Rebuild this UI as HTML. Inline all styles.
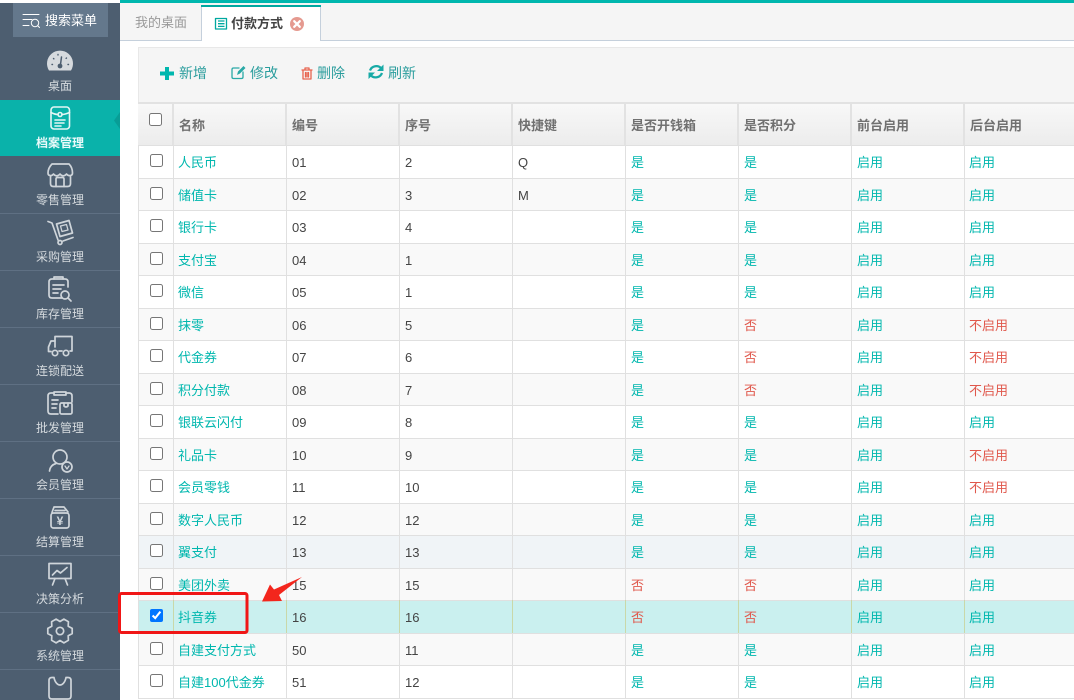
<!DOCTYPE html>
<html lang="zh"><head><meta charset="utf-8"><title>付款方式</title>
<style>
html,body{margin:0;padding:0;width:1074px;height:700px;overflow:hidden;background:#fff}
body{position:relative;font:13px/1.2 "Liberation Sans","Noto Sans CJK SC",sans-serif;color:#444}
#side{position:absolute;left:0;top:0;width:120px;height:700px;background:#4d5e70}
.m{position:absolute;left:0;width:120px;text-align:center;font-size:12px;line-height:18px;color:#d5dade}
.l{position:absolute;left:0;width:120px;height:1px;background:#5f7083}
#top{position:absolute;left:0;top:0;width:120px;height:3px;background:#fff}
#search{position:absolute;left:13px;top:3px;width:95px;height:34px;background:#64788c;color:#fff;line-height:36px;text-indent:32px}
#act{position:absolute;left:0;top:100px;width:120px;height:56px;background:#0ab2aa}
#bar{position:absolute;left:120px;top:0;width:954px;height:3px;background:#00b7ae}
#tabs{position:absolute;left:120px;top:3px;width:954px;height:37px;background:#f5f5f5;border-bottom:1px solid #c5d0dc}
#t1{position:absolute;left:135px;top:15px;color:#999;line-height:16px}
#t2{position:absolute;left:201px;top:5px;width:118px;height:36px;background:#fff;border-left:1px solid #c5d0dc;border-right:1px solid #c5d0dc;box-sizing:content-box}
#t2c{position:absolute;left:201px;top:5px;width:120px;height:2px;background:#00a8a0}
#t2t{position:absolute;left:231px;top:15px;color:#444;font-weight:bold;line-height:17px}
#tool{position:absolute;left:138px;top:47px;width:936px;height:55px;background:#f5f5f5;box-shadow:inset 0 1px 0 #e8e8e8,inset 1px 0 0 #e8e8e8}
#toolb{position:absolute;left:138px;top:102px;width:936px;height:2px;background:#e2e2e2}
.tb{position:absolute;top:64px;font-size:14px;line-height:18px;color:#2a9d9d}
#head{position:absolute;left:138px;top:104px;width:936px;height:41px;background:linear-gradient(#f8f8f8,#ececec)}
#head span{position:absolute;top:0;height:41px;line-height:43px;border-left:2px solid #e2e2e2;padding-left:5px;font-weight:bold;color:#707070;box-sizing:border-box;width:113px}
#head input{position:absolute;left:11px;top:9px;margin:0}
.r{position:absolute;left:138px;width:936px;height:33px;background:#fff;box-shadow:inset 0 1px 0 #e0e0e0}
.r.s{height:32px}
.r.g{background:#f9f9f9}
.r.h{background:#f0f4f7}
.r.x{background:#caf0ef}
.r input{position:absolute;left:12px;top:9px;margin:0}
.r span{position:absolute;top:0;height:100%;line-height:36px;border-left:1px solid #e0e0e0;padding-left:5px;white-space:nowrap;box-sizing:border-box;width:113px}
.r.x span{border-left-color:#c9d8a9}
.r::before{content:"";position:absolute;left:0;top:0;bottom:0;width:1px;background:#e0e0e0}
.r span:nth-of-type(1),#head span:nth-of-type(1){left:35px}
.r span:nth-of-type(2),#head span:nth-of-type(2){left:148px}
.r span:nth-of-type(3),#head span:nth-of-type(3){left:261px}
.r span:nth-of-type(4),#head span:nth-of-type(4){left:374px}
.r span:nth-of-type(5),#head span:nth-of-type(5){left:487px}
.r span:nth-of-type(6),#head span:nth-of-type(6){left:600px}
.r span:nth-of-type(7),#head span:nth-of-type(7){left:713px}
.r span:nth-of-type(8),#head span:nth-of-type(8){left:826px}
#head span{margin-left:-1px}
.r span:nth-of-type(1){padding-left:4px}
.r span:nth-of-type(8){padding-left:4px}
.t{color:#00b7ae}.d{color:#e0584c}
#end{position:absolute;left:138px;top:698px;width:936px;height:1px;background:#e0e0e0}
svg{position:absolute;left:0;top:0}
</style></head><body>
<div id="side"></div>
<div id="top"></div>
<div id="act"></div>
<div id="search">搜索菜单</div>
<div class="m" style="top:77px">桌面</div>
<div class="m" style="top:134px;color:#eafafa;font-weight:bold">档案管理</div>
<div class="m" style="top:191px">零售管理</div>
<div class="m" style="top:248px">采购管理</div>
<div class="m" style="top:305px">库存管理</div>
<div class="m" style="top:362px">连锁配送</div>
<div class="m" style="top:419px">批发管理</div>
<div class="m" style="top:476px">会员管理</div>
<div class="m" style="top:533px">结算管理</div>
<div class="m" style="top:590px">决策分析</div>
<div class="m" style="top:647px">系统管理</div>
<div class="l" style="top:213px"></div><div class="l" style="top:270px"></div><div class="l" style="top:327px"></div><div class="l" style="top:384px"></div><div class="l" style="top:441px"></div><div class="l" style="top:498px"></div><div class="l" style="top:555px"></div><div class="l" style="top:612px"></div><div class="l" style="top:669px"></div>

<div id="bar"></div>
<div id="tabs"></div>
<div id="t1">我的桌面</div>
<div id="t2"></div><div id="t2c"></div>
<div id="t2t">付款方式</div>
<div id="tool"></div><div id="toolb"></div>
<div class="tb" style="left:179px">新增</div>
<div class="tb" style="left:250px">修改</div>
<div class="tb" style="left:317px">删除</div>
<div class="tb" style="left:388px">刷新</div>

<div id="head"><input type="checkbox"><span>名称</span><span>编号</span><span>序号</span><span>快捷键</span><span>是否开钱箱</span><span>是否积分</span><span>前台启用</span><span>后台启用</span></div>

<div class="r" style="top:145px"><input type="checkbox"><span class="t">人民币</span><span>01</span><span>2</span><span>Q</span><span class="t">是</span><span class="t">是</span><span class="t">启用</span><span class="t">启用</span></div>
<div class="r s g" style="top:178px"><input type="checkbox"><span class="t">储值卡</span><span>02</span><span>3</span><span>M</span><span class="t">是</span><span class="t">是</span><span class="t">启用</span><span class="t">启用</span></div>
<div class="r" style="top:210px"><input type="checkbox"><span class="t">银行卡</span><span>03</span><span>4</span><span></span><span class="t">是</span><span class="t">是</span><span class="t">启用</span><span class="t">启用</span></div>
<div class="r s g" style="top:243px"><input type="checkbox"><span class="t">支付宝</span><span>04</span><span>1</span><span></span><span class="t">是</span><span class="t">是</span><span class="t">启用</span><span class="t">启用</span></div>
<div class="r" style="top:275px"><input type="checkbox"><span class="t">微信</span><span>05</span><span>1</span><span></span><span class="t">是</span><span class="t">是</span><span class="t">启用</span><span class="t">启用</span></div>
<div class="r s g" style="top:308px"><input type="checkbox"><span class="t">抹零</span><span>06</span><span>5</span><span></span><span class="t">是</span><span class="d">否</span><span class="t">启用</span><span class="d">不启用</span></div>
<div class="r" style="top:340px"><input type="checkbox"><span class="t">代金券</span><span>07</span><span>6</span><span></span><span class="t">是</span><span class="d">否</span><span class="t">启用</span><span class="d">不启用</span></div>
<div class="r s g" style="top:373px"><input type="checkbox"><span class="t">积分付款</span><span>08</span><span>7</span><span></span><span class="t">是</span><span class="d">否</span><span class="t">启用</span><span class="d">不启用</span></div>
<div class="r" style="top:405px"><input type="checkbox"><span class="t">银联云闪付</span><span>09</span><span>8</span><span></span><span class="t">是</span><span class="t">是</span><span class="t">启用</span><span class="t">启用</span></div>
<div class="r s g" style="top:438px"><input type="checkbox"><span class="t">礼品卡</span><span>10</span><span>9</span><span></span><span class="t">是</span><span class="t">是</span><span class="t">启用</span><span class="d">不启用</span></div>
<div class="r" style="top:470px"><input type="checkbox"><span class="t">会员零钱</span><span>11</span><span>10</span><span></span><span class="t">是</span><span class="t">是</span><span class="t">启用</span><span class="d">不启用</span></div>
<div class="r s g" style="top:503px"><input type="checkbox"><span class="t">数字人民币</span><span>12</span><span>12</span><span></span><span class="t">是</span><span class="t">是</span><span class="t">启用</span><span class="t">启用</span></div>
<div class="r h" style="top:535px"><input type="checkbox"><span class="t">翼支付</span><span>13</span><span>13</span><span></span><span class="t">是</span><span class="t">是</span><span class="t">启用</span><span class="t">启用</span></div>
<div class="r s g" style="top:568px"><input type="checkbox"><span class="t">美团外卖</span><span>15</span><span>15</span><span></span><span class="d">否</span><span class="d">否</span><span class="t">启用</span><span class="t">启用</span></div>
<div class="r x" style="top:600px"><input type="checkbox" checked><span class="t">抖音券</span><span>16</span><span>16</span><span></span><span class="d">否</span><span class="d">否</span><span class="t">启用</span><span class="t">启用</span></div>
<div class="r s g" style="top:633px"><input type="checkbox"><span class="t">自建支付方式</span><span>50</span><span>11</span><span></span><span class="t">是</span><span class="t">是</span><span class="t">启用</span><span class="t">启用</span></div>
<div class="r" style="top:665px"><input type="checkbox"><span class="t">自建100代金券</span><span>51</span><span>12</span><span></span><span class="t">是</span><span class="t">是</span><span class="t">启用</span><span class="t">启用</span></div>
<div id="end"></div>

<svg width="1074" height="700" viewBox="0 0 1074 700" fill="none" stroke-linecap="round" stroke-linejoin="round">
<!-- search -->
<g stroke="#fff" stroke-width="1"><path d="M23 14.500H39M23 19.500H32M23 25.500H29"/><circle cx="35" cy="23" r="3.700"/><path d="M38 26l1.500 1.500"/></g>
<!-- gauge -->
<path d="M49 70.500A13 13 0 1 1 71 70.500Z" fill="#d6dade"/>
<path d="M61.500 57L60.300 66" stroke="#4d5e70" stroke-width="1.500"/><circle cx="60" cy="66" r="2.400" fill="#4d5e70"/>
<g stroke="#4d5e70" stroke-width="1.400"><path d="M52 64.500h.5M53.500 58.500l.4.4M58 54.500v.5M66.500 58l-.4.4M68.500 64.500h-.5"/></g>
<!-- archive -->
<g stroke="#e4f6f5" stroke-width="1.600"><rect x="51" y="107" width="18.500" height="22" rx="3"/><path d="M51 112.500C54 114 56 114.500 58 114.500M62 114.500C64 114.500 66 114 69.500 112.500"/><circle cx="60" cy="114.500" r="2"/><path d="M55 120H65M55 123H64M55 126H61"/></g>
<path d="M120 112L114 120.500L120 129Z" fill="#089d96"/>
<g stroke="#cfd5da" stroke-width="1.700">
<!-- store -->
<path d="M52 164H69C71 166 72.500 169 72.500 173C72.500 176 68.500 176.500 66.500 174C64.500 176.500 62 176.500 60 174C58 176.500 55.500 176.500 53.500 174C51.500 176.500 48 176 48 173C48 169 50 166 52 164Z"/><path d="M50.500 176.500V183.500Q50.500 186.500 53.500 186.500H67.500Q70.500 186.500 70.500 183.500V176.500"/><path d="M56 186.500V179Q56 177.500 57.500 177.500H62.500Q64 177.500 64 179V186.500"/>
<!-- cart -->
<path d="M48 221.500L52 223L58 240"/><circle cx="60" cy="242.500" r="2"/><path d="M63 241L73 237.500"/><path d="M56.500 224L69 220.500L72.500 233L60 236.500Z"/><path d="M60.500 226L66.500 224.500L68 230L62 231.500Z" stroke-width="1.300"/>
<!-- inventory -->
<path d="M62 298H52Q49 298 49 295V282Q49 279 52 279H65Q68 279 68 282V287"/><path d="M54 279V277H63V279"/><path d="M53 285H64M53 289H61M53 293H58"/><circle cx="65" cy="295" r="4"/><path d="M68 298l3 3"/>
<!-- truck -->
<path d="M55 347V336.500H72V351H70"/><path d="M62 351H59"/><path d="M55 341H51L48.500 347V351.500H51"/><circle cx="55" cy="353" r="2.700"/><circle cx="66" cy="353" r="2.700"/>
<!-- wholesale -->
<path d="M58 414H51Q48 414 48 411V396Q48 393 51 393H54M66 393H69Q72 393 72 396V402"/><path d="M54 392H66V395H54Z"/><path d="M52 400H58M52 404H57M52 408H56"/><rect x="60" y="403" width="12" height="11" rx="1.500"/><path d="M64 403V406Q66 408 68 406V403"/>
<!-- member -->
<circle cx="60" cy="457" r="7"/><path d="M49.500 471C50 467 52.500 464.500 56 463.500"/><circle cx="67" cy="467" r="5"/><path d="M65 466L67 469L69 466" stroke-width="1.300"/>
<!-- settlement -->
<rect x="51" y="513" width="18" height="15" rx="2.500"/><path d="M52 512.500L54 507L64 507L68 512"/><path d="M55 510.500L65 510.500"/>
<!-- decision -->
<rect x="49" y="563.500" width="22" height="15"/><path d="M52.500 575L57 570.500L60.500 573L67 567.500"/><path d="M55 578.500L52.500 585M65 578.500L67.500 585"/>
<!-- gear -->
<path d="M72.200 628.400L72.200 633.600L68.200 635.750L68.400 640.300L63.900 642.900L60 640.500L56.100 642.900L51.600 640.300L51.800 635.750L47.800 633.600L47.800 628.400L51.800 626.250L51.600 621.700L56.100 619.100L60 621.500L63.900 619.100L68.400 621.700L68.200 626.250Z"/><circle cx="60" cy="631" r="3.700"/>
<!-- bag -->
<path d="M52 677.500H54C55 683 58 685 60 685C62 685 65 683 66 677.500H68Q71 677.500 71 680.500V696Q71 699 68 699H52Q49 699 49 696V680.500Q49 677.500 52 677.500Z"/>
</g>
<text x="60" y="525" text-anchor="middle" fill="#cfd5da" font-size="12" font-weight="bold" font-family="Liberation Sans, sans-serif">¥</text>
<!-- tab icon -->
<g stroke="#00a8a0" stroke-width="1.300" stroke-linecap="butt"><rect x="215.500" y="18.500" width="11" height="10.500"/><path d="M218 21H224.500M218 23.700H224.500M218 26.400H224.500"/></g>
<circle cx="297" cy="24" r="7" fill="#e59a90"/><path d="M294.200 21.200L299.800 26.800M299.800 21.200L294.200 26.800" stroke="#fff" stroke-width="2.200"/>
<!-- toolbar icons -->
<path d="M167 67V80M160 73.500H174" stroke="#00b7ae" stroke-width="4" stroke-linecap="butt"/>
<path d="M243 72V77Q243 78.500 241.500 78.500H233.500Q232 78.500 232 77V69.500Q232 68 233.500 68H239" stroke="#2aa9a6" stroke-width="1.300"/><path d="M237 75L238 71.500L243.500 66L245.500 68L240 73.500Z" fill="#2aa9a6"/>
<g stroke="#e8644f" stroke-width="1.300"><path d="M302 70H312M305 70V68H309V70"/><path d="M303 70.500V79H311V70.500"/><path d="M305.500 72.500V77M307 72.500V77M308.500 72.500V77"/></g>
<g stroke="#17aaa6" stroke-width="2.300" stroke-linecap="butt"><path d="M370 70.500A6.800 6.800 0 0 1 381.500 68.500"/><path d="M382 73A6.800 6.800 0 0 1 370.500 75"/></g>
<path d="M383.500 64.500V71H377Z M368.500 79V72.500H375Z" fill="#17aaa6"/>
<!-- annotation -->
<rect x="119.500" y="593.500" width="127.500" height="39" rx="2" stroke="#f01616" stroke-width="3"/>
<path d="M262 601.500L270 584.500L274 589.500L302 577L279 595L282 601Z" fill="#f3261d"/>
</svg>
</body></html>
